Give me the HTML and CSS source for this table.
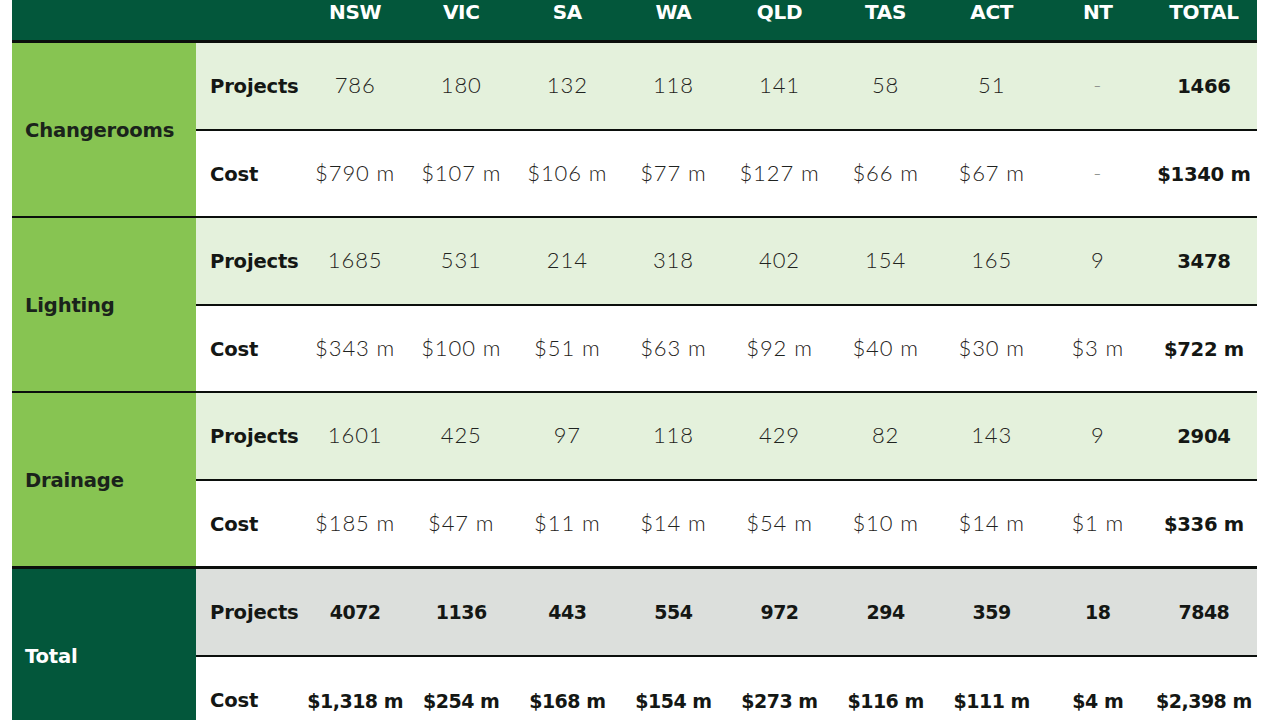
FILE: index.html
```html
<!DOCTYPE html>
<html lang="en">
<head>
<meta charset="utf-8">
<title>Projects and cost by state</title>
<link rel="stylesheet" href="styles.css">
</head>
<body>
<div class="table">
  <div class="head">
    <div class="hcell"></div>
    <div class="hcell"></div>
    <div class="hcell">NSW</div>
    <div class="hcell">VIC</div>
    <div class="hcell">SA</div>
    <div class="hcell">WA</div>
    <div class="hcell">QLD</div>
    <div class="hcell">TAS</div>
    <div class="hcell">ACT</div>
    <div class="hcell">NT</div>
    <div class="hcell">TOTAL</div>
  </div>

  <div class="group">
    <div class="cat">Changerooms</div>
    <div class="rows">
      <div class="row tint">
        <div class="lbl">Projects</div>
        <div class="v">786</div><div class="v">180</div><div class="v">132</div><div class="v">118</div><div class="v">141</div><div class="v">58</div><div class="v">51</div><div class="v dash">-</div><div class="v b">1466</div>
      </div>
      <div class="row">
        <div class="lbl">Cost</div>
        <div class="v">$790 m</div><div class="v">$107 m</div><div class="v">$106 m</div><div class="v">$77 m</div><div class="v">$127 m</div><div class="v">$66 m</div><div class="v">$67 m</div><div class="v dash">-</div><div class="v b">$1340 m</div>
      </div>
    </div>
  </div>

  <div class="group">
    <div class="cat">Lighting</div>
    <div class="rows">
      <div class="row tint">
        <div class="lbl">Projects</div>
        <div class="v">1685</div><div class="v">531</div><div class="v">214</div><div class="v">318</div><div class="v">402</div><div class="v">154</div><div class="v">165</div><div class="v">9</div><div class="v b">3478</div>
      </div>
      <div class="row">
        <div class="lbl">Cost</div>
        <div class="v">$343 m</div><div class="v">$100 m</div><div class="v">$51 m</div><div class="v">$63 m</div><div class="v">$92 m</div><div class="v">$40 m</div><div class="v">$30 m</div><div class="v">$3 m</div><div class="v b">$722 m</div>
      </div>
    </div>
  </div>

  <div class="group">
    <div class="cat">Drainage</div>
    <div class="rows">
      <div class="row tint">
        <div class="lbl">Projects</div>
        <div class="v">1601</div><div class="v">425</div><div class="v">97</div><div class="v">118</div><div class="v">429</div><div class="v">82</div><div class="v">143</div><div class="v">9</div><div class="v b">2904</div>
      </div>
      <div class="row">
        <div class="lbl">Cost</div>
        <div class="v">$185 m</div><div class="v">$47 m</div><div class="v">$11 m</div><div class="v">$14 m</div><div class="v">$54 m</div><div class="v">$10 m</div><div class="v">$14 m</div><div class="v">$1 m</div><div class="v b">$336 m</div>
      </div>
    </div>
  </div>

  <div class="group total">
    <div class="cat">Total</div>
    <div class="rows">
      <div class="row grey">
        <div class="lbl">Projects</div>
        <div class="v t">4072</div><div class="v t">1136</div><div class="v t">443</div><div class="v t">554</div><div class="v t">972</div><div class="v t">294</div><div class="v t">359</div><div class="v t">18</div><div class="v t">7848</div>
      </div>
      <div class="row">
        <div class="lbl">Cost</div>
        <div class="v t">$1,318 m</div><div class="v t">$254 m</div><div class="v t">$168 m</div><div class="v t">$154 m</div><div class="v t">$273 m</div><div class="v t">$116 m</div><div class="v t">$111 m</div><div class="v t">$4 m</div><div class="v t">$2,398 m</div>
      </div>
    </div>
  </div>
</div>
</body>
</html>
```
FILE: styles.css
```css
* { box-sizing: border-box; }
html, body { margin: 0; padding: 0; background: #ffffff; }
body {
  font-family: "DejaVu Sans", "Liberation Sans", sans-serif;
  color: #1c1f1c;
  overflow: hidden;
  height: 720px;
}
.table {
  margin-left: 12px;
  width: 1245px;
}
.head {
  display: grid;
  grid-template-columns: 184px repeat(10, 106.1px);
  height: 43px;
  background: #03573b;
  border-bottom: 3px solid #0b0f0c;
}
.hcell {
  color: #ffffff;
  font-weight: 700;
  font-size: 20px;
  line-height: 24px;
  text-align: center;
  letter-spacing: -0.3px;
}
.group {
  display: grid;
  grid-template-columns: 184px 1fr;
  border-bottom: 2px solid #0b0f0c;
}
.group.total { border-bottom: none; border-top: 1px solid #0b0f0c; }
.cat {
  background: #87c452;
  display: flex;
  align-items: center;
  padding-left: 13px;
  padding-top: 1px;
  font-size: 19.6px;
  font-weight: 700;
  color: #1a231b;
  letter-spacing: -0.2px;
}
.total .cat { background: #03573b; color: #ffffff; }
.rows { display: flex; flex-direction: column; }
.row {
  display: grid;
  grid-template-columns: repeat(10, 106.1px);
  align-items: center;
  height: 85.5px;
  background: #ffffff;
  padding-bottom: 2px;
}
.row.tint { background: #e4f1dc; border-bottom: 2px solid #0b0f0c; height: 87.5px; padding-bottom: 4px; }
.row.grey { background: #dcdfdc; border-bottom: 2px solid #0b0f0c; height: 87.5px; padding-bottom: 4px; }
.lbl {
  padding-left: 14px;
  padding-top: 5px;
  font-size: 19.6px;
  font-weight: 700;
  color: #141714;
  letter-spacing: -0.2px;
}
.v {
  font-family: "Lato", "Liberation Sans", sans-serif;
  text-align: center;
  font-size: 22px;
  font-weight: 300;
  color: #1f2320;
  white-space: nowrap;
  letter-spacing: 0.9px;
  padding-top: 1px;
}
.v.b, .v.t {
  font-family: "DejaVu Sans", "Liberation Sans", sans-serif;
  font-weight: 700;
  color: #141714;
  letter-spacing: -0.3px;
  padding-top: 5px;
}
.v.b { font-size: 19.6px; }
.v.t { font-size: 19px; letter-spacing: -0.5px; }
.v.dash { color: #8a8e8b; }
```
